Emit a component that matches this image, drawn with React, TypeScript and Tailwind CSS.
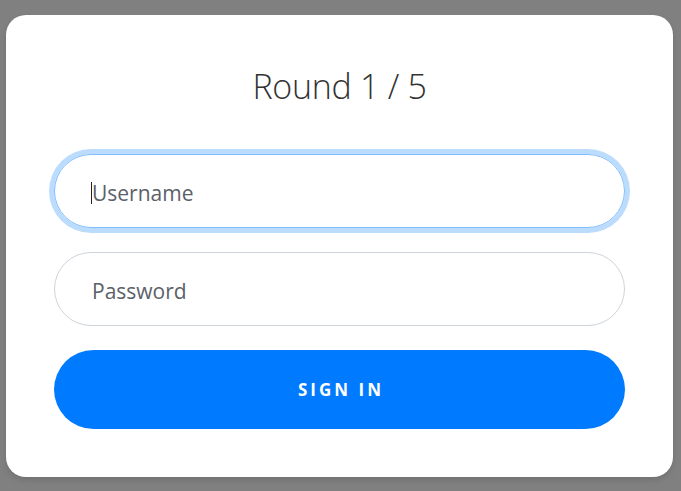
import React from "react";

export default function App() {
  return (
    <div className="w-[681px] h-[491px] bg-[#808080] pt-[15px] px-[6px] pb-[14px] box-border" style={{ fontFamily: '"Open Sans", "Noto Sans", sans-serif' }}>
      <div className="h-full w-[667px] bg-white rounded-[20px] shadow-[0_3px_6px_rgba(0,0,0,0.12)] px-12 pt-[46px] pb-12 box-border flex flex-col">
        <h1 className="h-[50px] leading-[50px] text-center text-[34px] font-light text-[#333] tracking-[-0.3px]">Round 1 / 5</h1>
        <div className="mt-[43px] flex flex-col gap-6">
          <div className="h-[74px] rounded-full border border-[#80bdff] ring-[5px] ring-[#bcdcfd] flex items-center pl-[36px] pt-[3px] text-[21px] text-[#5b6168]">
            <span className="border-l border-[#222] leading-[22px]">Username</span>
          </div>
          <div className="h-[74px] rounded-full border border-[#ced4da] flex items-center pl-[37px] pt-[5px] text-[21px] text-[#5b6168]">
            Password
          </div>
          <div className="h-[79px] rounded-full bg-[#007bff] flex items-center justify-center text-white font-bold text-[17px] tracking-[3px] pl-[3px]">
            SIGN IN
          </div>
        </div>
      </div>
    </div>
  );
}
